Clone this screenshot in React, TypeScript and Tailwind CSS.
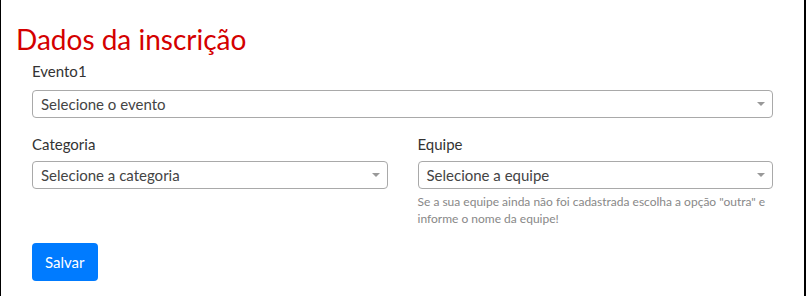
import React from 'react';

function SelectBox({ placeholder }: { placeholder: string }) {
  return (
    <div className="flex h-[28px] items-center justify-between rounded-[4px] border border-[#a9a9a9] bg-white pl-[8px] pr-[8px]">
      <span className="text-[15px] leading-none text-[#444]">{placeholder}</span>
      <svg width="8" height="4" viewBox="0 0 8 4" className="mr-[-1px]">
        <path d="M0 0 L8 0 L4 4 Z" fill="#999" />
      </svg>
    </div>
  );
}

export default function App() {
  return (
    <div className="h-[296px] w-[806px] border-l border-r-2 border-black bg-white font-['Lato','Noto_Sans',sans-serif]">
      <div className="pl-[15px] pt-[20px]">
        <h1 className="text-[28px] leading-[38px] text-[#d40000]">Dados da inscrição</h1>
      </div>
      <div className="pl-[31px] pr-[31px]">
        {/* Evento */}
        <div className="mt-[2px]">
          <label className="block text-[15px] leading-[22px] text-[#333]">Evento1</label>
          <div className="mt-[8px]">
            <SelectBox placeholder="Selecione o evento" />
          </div>
        </div>

        <div className="mt-[15px] grid grid-cols-2 gap-x-[30px]">
          <div>
            <label className="block text-[15px] leading-[22px] text-[#333]">Categoria</label>
            <div className="mt-[6px]">
              <SelectBox placeholder="Selecione a categoria" />
            </div>
          </div>
          <div>
            <label className="block text-[15px] leading-[22px] text-[#333]">Equipe</label>
            <div className="mt-[6px]">
              <SelectBox placeholder="Selecione a equipe" />
            </div>
            <p className="mt-[5px] text-[12px] leading-[16.5px] text-[#888]">
              Se a sua equipe ainda não foi cadastrada escolha a opção "outra" e informe o nome da equipe!
            </p>
          </div>
        </div>

        <button className="mt-[16px] h-[38px] rounded-[4px] bg-[#007bff] px-[13px] text-[15px] text-white">
          Salvar
        </button>
      </div>
    </div>
  );
}
